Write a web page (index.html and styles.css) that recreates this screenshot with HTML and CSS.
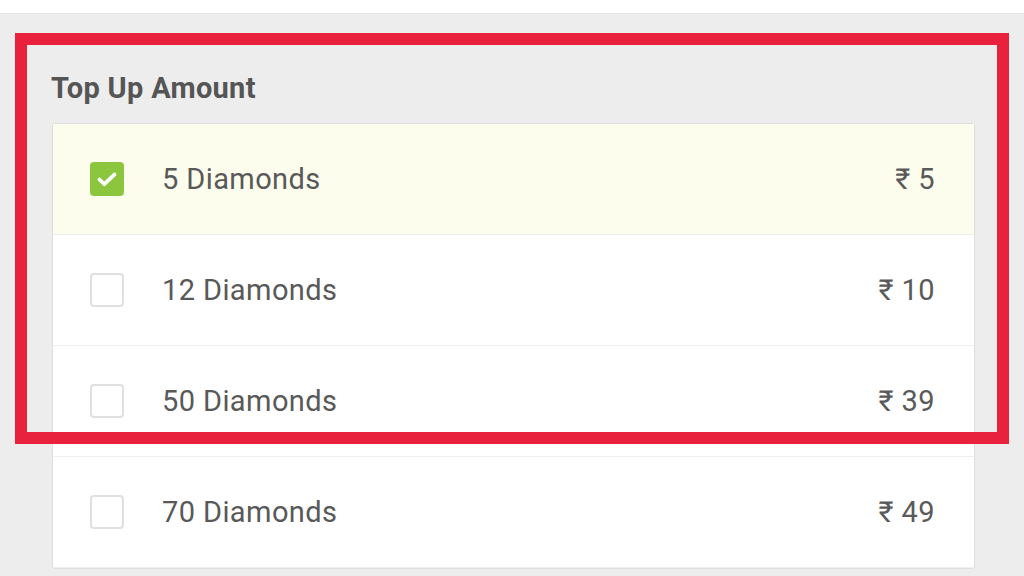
FILE: index.html
```html
<!DOCTYPE html>
<html lang="en">
<head>
    <meta charset="UTF-8">
    <meta name="viewport" content="width=device-width, initial-scale=1.0">
    <title>Top Up Amount</title>
    <link rel="stylesheet" href="styles.css">
</head>
<body>

    <div class="top-bar"></div>

    <!-- Amount picker -->
    <div class="topup">
        <h2 class="topup-title">Top Up Amount</h2>
        <div class="amount-list">
            <div class="amount-row selected">
                <span class="check checked">
                    <svg viewBox="0 0 24 24" width="26" height="26"><path d="M5 12.5l4.5 4.3L19 7.8" fill="none" stroke="#fff" stroke-width="3.4" stroke-linecap="round" stroke-linejoin="round"/></svg>
                </span>
                <span class="amount-name">5 Diamonds</span>
                <span class="amount-price">₹ 5</span>
            </div>
            <div class="amount-row">
                <span class="check"></span>
                <span class="amount-name">12 Diamonds</span>
                <span class="amount-price">₹ 10</span>
            </div>
            <div class="amount-row">
                <span class="check"></span>
                <span class="amount-name">50 Diamonds</span>
                <span class="amount-price">₹ 39</span>
            </div>
            <div class="amount-row">
                <span class="check"></span>
                <span class="amount-name">70 Diamonds</span>
                <span class="amount-price">₹ 49</span>
            </div>
        </div>
    </div>

    <!-- Red highlight frame drawn over the list -->
    <div class="highlight"></div>

</body>
</html>
```

FILE: styles.css
```css
body {
    margin: 0;
    font-family: Roboto, 'Noto Sans', sans-serif;
    background-color: #ededed;
    color: #595959;
    height: 576px;
    overflow: hidden;
    position: relative;
}

.top-bar {
    height: 13px;
    background-color: #fff;
    border-bottom: 1px solid #e4e4e4;
}

.topup {
    padding: 58px 49px 0 52px;
}

.topup-title {
    margin: 0 0 19px -1px;
    font-size: 29px;
    line-height: 32px;
    letter-spacing: 0.3px;
    font-weight: bold;
    color: #555;
}

.amount-list {
    background-color: #fff;
    border: 1px solid #dedede;
    border-radius: 3px;
}

.amount-row {
    display: flex;
    align-items: center;
    height: 110px;
    padding: 0 39px 0 37px;
    border-bottom: 1px solid #efefef;
    font-size: 29px;
    letter-spacing: 0.4px;
}

.amount-row.selected {
    background-color: #fdfdee;
}

.check {
    width: 30px;
    height: 30px;
    border: 2px solid #e0e0e0;
    border-radius: 4px;
    display: flex;
    align-items: center;
    justify-content: center;
    flex-shrink: 0;
}

.check.checked {
    background-color: #8cc63e;
    border-color: #8cc63e;
}

.amount-name {
    margin-left: 38px;
    flex: 1;
}

.amount-price {
    color: #5a5a5a;
}

.highlight {
    position: absolute;
    left: 15px;
    top: 33px;
    width: 970px;
    height: 387px;
    border: 12px solid #e8213c;
}
```
